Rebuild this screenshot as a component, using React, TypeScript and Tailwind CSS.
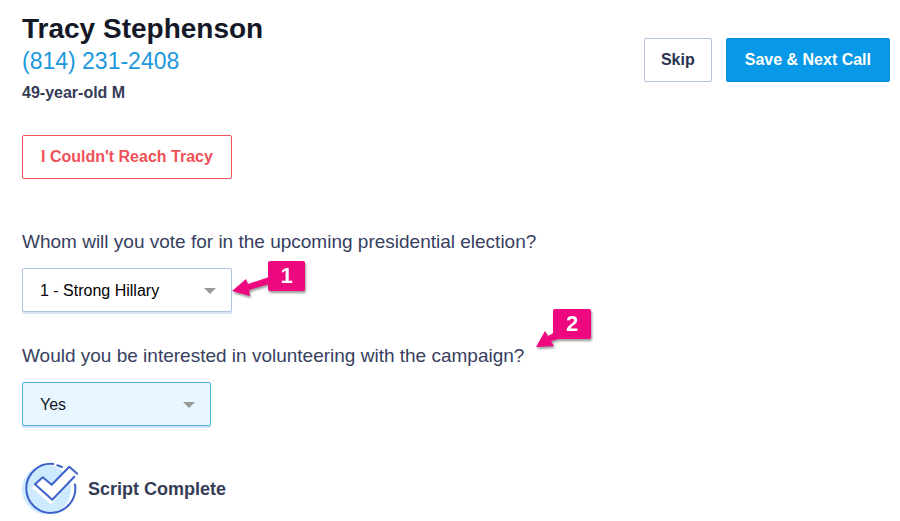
import { useState } from 'react';
import type { ReactNode } from 'react';

const voteOptions = ['1 - Strong Hillary', '2 - Lean Hillary', '3 - Undecided', '4 - Lean Other', '5 - Strong Other'];
const volunteerOptions = ['Yes', 'Maybe', 'No'];

function Question({
  id,
  label,
  options,
  selectClass,
  children,
}: {
  id: string;
  label: string;
  options: string[];
  selectClass: string;
  children?: ReactNode;
}) {
  const [value, setValue] = useState(options[0]);

  return (
    <div className="relative flex flex-col items-start gap-3">
      <label htmlFor={id} className="text-[19px] leading-7 text-[#374060]">
        {label}
      </label>
      <div className="relative">
        <select
          id={id}
          value={value}
          onChange={(e) => setValue(e.target.value)}
          className={`block h-11 appearance-none rounded-xs border pl-[17px] pr-9 pt-0.5 text-base ${selectClass}`}
        >
          {options.map((option) => (
            <option key={option}>{option}</option>
          ))}
        </select>
        <svg
          viewBox="0 0 12 6"
          className="pointer-events-none absolute right-4 top-5 h-1.5 w-3 fill-[#999]"
          aria-hidden="true"
        >
          <path d="M0 0h12L6 6z" />
        </svg>
      </div>
      {children}
    </div>
  );
}

function CompleteIcon() {
  return (
    <svg viewBox="0 0 56 56" className="size-14 shrink-0" fill="none" aria-hidden="true">
      <circle cx="24.5" cy="28.500" r="24.5" fill="#cdeaff" />
      <path d="M9.500 26.500L20.700 16.300 29.700 23.700 47.300 5.700 54 14 29 43.500z" fill="#fff" />
      <path d="M50 18A24.500 24.500 0 0 1 47 41" stroke="#fff" strokeWidth="3" />
      <g stroke="#3d62cb" strokeWidth="2" strokeLinecap="round" strokeLinejoin="round">
        <path d="M31.300 3A24.500 24.500 0 1 0 53 23.500" />
        <path d="M35.300 4.300L40 6" />
        <path d="M55.300 12.700L47.300 5.700 29.700 23.700 20.700 16.300 13 23.300 30.300 38.700 52.300 15.700" />
      </g>
    </svg>
  );
}

export default function App() {
  return (
    <main className="bg-white px-[22px] pt-[13px] pb-1 font-['Liberation_Sans',Arial,sans-serif] text-[#2c3350]">
      <header className="-mr-3 flex items-start justify-between">
        <div className="leading-8">
          <h1 className="text-[28px] font-bold leading-8 text-[#151827]">Tracy Stephenson</h1>
          <a href="tel:8142312408" className="block text-[23px] leading-8 text-[#1c98dc]">
            (814) 231-2408
          </a>
          <p className="text-base font-bold leading-8 text-[#353c57]">49-year-old M</p>
        </div>
        <div className="mt-[25px] flex gap-3.5">
          <button className="h-11 rounded-xs border border-[#b3c0df] px-4 text-base font-bold">Skip</button>
          <button className="h-11 rounded-xs border border-[#058ddd] bg-[#0798e7] px-[18px] text-base font-bold text-white">
            Save &amp; Next Call
          </button>
        </div>
      </header>

      <button className="mt-[26px] h-11 rounded-xs border border-[#ea5458] px-[18px] text-base font-bold text-[#ee5257]">
        I Couldn't Reach Tracy
      </button>

      <form className="mt-[49px] flex flex-col gap-[30px]">
        <Question
          id="vote"
          label="Whom will you vote for in the upcoming presidential election?"
          options={voteOptions}
          selectClass="w-[210px] border-[#aec1e2] bg-white text-black shadow-[0_2px_0_#d8e2f0]"
        >
          <div className="absolute left-[209px] top-[33px] h-10 w-[74px] drop-shadow-[1px_2px_1px_rgba(0,0,0,0.4)]">
            <svg viewBox="0 0 74 40" className="h-10 w-[74px] fill-[#ed087f]" aria-hidden="true">
              <path d="M1 30l14-12 2 5 21-7v7l-20 6 1 6z" />
            </svg>
            <span className="absolute right-0 top-0 h-[30px] w-[37px] rounded-xs bg-[#ed087f] text-center text-[22px] font-bold leading-[30px] text-white">
              1
            </span>
          </div>
        </Question>

        <Question
          id="volunteer"
          label="Would you be interested in volunteering with the campaign?"
          options={volunteerOptions}
          selectClass="w-[189px] border-[#4db1e4] bg-[#e7f6ff] text-[#151827] shadow-[0_2px_0_#cfe3f3]"
        >
          <div className="absolute left-[513px] -top-[33px] h-10 w-14 drop-shadow-[1px_2px_1px_rgba(0,0,0,0.4)]">
            <svg viewBox="0 0 56 40" className="h-10 w-14 fill-[#ed087f]" aria-hidden="true">
              <path d="M1 38l9-16 3 5 9-5 5 7-11 3 3 5z" />
            </svg>
            <span className="absolute right-0 top-0 h-[30px] w-[38px] rounded-xs bg-[#ed087f] text-center text-[22px] font-bold leading-[30px] text-white">
              2
            </span>
          </div>
        </Question>
      </form>

      <div className="mt-[35px] flex items-center gap-2.5">
        <CompleteIcon />
        <p className="text-lg font-bold text-[#353c57]">Script Complete</p>
      </div>
    </main>
  );
}
